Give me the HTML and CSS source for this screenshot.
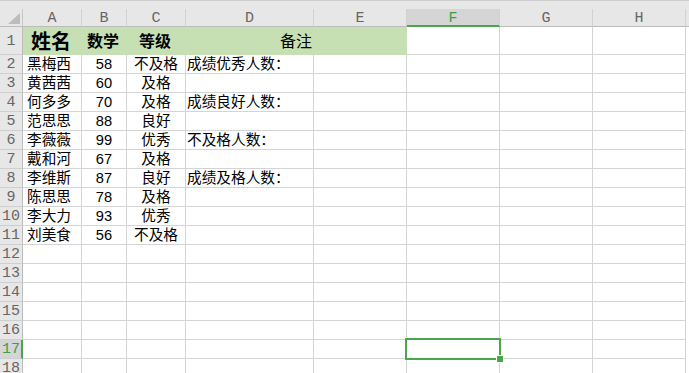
FILE: index.html
```html
<!DOCTYPE html>
<html lang="zh">
<head>
<meta charset="utf-8">
<title>Sheet</title>
<link rel="stylesheet" href="styles.css">
</head>
<body>
<div class="page">
  <div class="topstrip"></div>
  <div class="sheet">
    <div class="corner"><svg class="tri" width="12" height="11" viewBox="0 0 12 11"><polygon points="0,11 12,0 12,11" fill="#bdbdbd"/></svg></div>
    <div class="ch">A</div><div class="ch">B</div><div class="ch">C</div><div class="ch">D</div><div class="ch">E</div><div class="ch ch-sel">F</div><div class="ch">G</div><div class="ch">H</div><div class="ch ch-end"></div>

    <div class="rh">1</div>
    <div class="c g ctr big">姓名</div><div class="c g ctr mid">数学</div><div class="c g ctr mid">等级</div><div class="c g ctr note span2">备注</div><div class="c"></div><div class="c"></div><div class="c"></div><div class="end"></div>

    <div class="rh">2</div><div class="c a">黑梅西</div><div class="c ctr">58</div><div class="c ctr">不及格</div><div class="c d">成绩优秀人数：</div><div class="c"></div><div class="c"></div><div class="c"></div><div class="c"></div><div class="end"></div>
    <div class="rh">3</div><div class="c a">黄茜茜</div><div class="c ctr">60</div><div class="c ctr">及格</div><div class="c d"></div><div class="c"></div><div class="c"></div><div class="c"></div><div class="c"></div><div class="end"></div>
    <div class="rh">4</div><div class="c a">何多多</div><div class="c ctr">70</div><div class="c ctr">及格</div><div class="c d">成绩良好人数：</div><div class="c"></div><div class="c"></div><div class="c"></div><div class="c"></div><div class="end"></div>
    <div class="rh">5</div><div class="c a">范思思</div><div class="c ctr">88</div><div class="c ctr">良好</div><div class="c d"></div><div class="c"></div><div class="c"></div><div class="c"></div><div class="c"></div><div class="end"></div>
    <div class="rh">6</div><div class="c a">李薇薇</div><div class="c ctr">99</div><div class="c ctr">优秀</div><div class="c d">不及格人数：</div><div class="c"></div><div class="c"></div><div class="c"></div><div class="c"></div><div class="end"></div>
    <div class="rh">7</div><div class="c a">戴和河</div><div class="c ctr">67</div><div class="c ctr">及格</div><div class="c d"></div><div class="c"></div><div class="c"></div><div class="c"></div><div class="c"></div><div class="end"></div>
    <div class="rh">8</div><div class="c a">李维斯</div><div class="c ctr">87</div><div class="c ctr">良好</div><div class="c d">成绩及格人数：</div><div class="c"></div><div class="c"></div><div class="c"></div><div class="c"></div><div class="end"></div>
    <div class="rh">9</div><div class="c a">陈思思</div><div class="c ctr">78</div><div class="c ctr">及格</div><div class="c d"></div><div class="c"></div><div class="c"></div><div class="c"></div><div class="c"></div><div class="end"></div>
    <div class="rh">10</div><div class="c a">李大力</div><div class="c ctr">93</div><div class="c ctr">优秀</div><div class="c d"></div><div class="c"></div><div class="c"></div><div class="c"></div><div class="c"></div><div class="end"></div>
    <div class="rh">11</div><div class="c a">刘美食</div><div class="c ctr">56</div><div class="c ctr">不及格</div><div class="c d"></div><div class="c"></div><div class="c"></div><div class="c"></div><div class="c"></div><div class="end"></div>
    <div class="rh">12</div><div class="c"></div><div class="c"></div><div class="c"></div><div class="c"></div><div class="c"></div><div class="c"></div><div class="c"></div><div class="c"></div><div class="end"></div>
    <div class="rh">13</div><div class="c"></div><div class="c"></div><div class="c"></div><div class="c"></div><div class="c"></div><div class="c"></div><div class="c"></div><div class="c"></div><div class="end"></div>
    <div class="rh">14</div><div class="c"></div><div class="c"></div><div class="c"></div><div class="c"></div><div class="c"></div><div class="c"></div><div class="c"></div><div class="c"></div><div class="end"></div>
    <div class="rh">15</div><div class="c"></div><div class="c"></div><div class="c"></div><div class="c"></div><div class="c"></div><div class="c"></div><div class="c"></div><div class="c"></div><div class="end"></div>
    <div class="rh">16</div><div class="c"></div><div class="c"></div><div class="c"></div><div class="c"></div><div class="c"></div><div class="c"></div><div class="c"></div><div class="c"></div><div class="end"></div>
    <div class="rh rh-sel">17</div><div class="c"></div><div class="c"></div><div class="c"></div><div class="c"></div><div class="c"></div><div class="c"></div><div class="c"></div><div class="c"></div><div class="end"></div>
    <div class="rh">18</div><div class="c"></div><div class="c"></div><div class="c"></div><div class="c"></div><div class="c"></div><div class="c"></div><div class="c"></div><div class="c"></div><div class="end"></div>
  </div>
  <div class="sel"><div class="handle"></div></div>
</div>
</body>
</html>
```

FILE: styles.css
```css
* { box-sizing: border-box; }
html, body { margin: 0; padding: 0; background: #fff; overflow: hidden; }
body { width: 689px; height: 373px; }
.page { position: relative; width: 689px; height: 373px; overflow: hidden;
  font-family: "Liberation Sans", "Noto Sans CJK SC", sans-serif; color: #000; }
.topstrip { height: 9px; background: #e7e7e7; border-top: 1px solid #cdcdcd; }
.sheet { display: grid;
  grid-template-columns: 23px 59px 45px 59px 128px 93px 93px 93px 93px 1fr;
  grid-template-rows: 18px 28px repeat(17, 19px); }
.corner { background: #e7e7e7; border-right: 1px solid #c8c8c8; border-bottom: 1px solid #bcbcbc;
  display: flex; align-items: flex-end; justify-content: flex-end; padding: 0 2px 2px 0; }
.tri { display: block; }
.ch { background: #e7e7e7; border-right: 1px solid #d2d2d2; border-bottom: 1px solid #bcbcbc;
  display: flex; align-items: center; justify-content: center;
  font-family: "Liberation Mono", monospace; font-size: 15px; color: #666; padding-top: 1px; }
.ch-end { border-right: none; }
.ch-sel { background: #d5d5d5; color: #3f9f3f; border-bottom: 2px solid #4aa64a; padding-top: 2px; }
.rh { background: #e7e7e7; border-right: 1px solid #bcbcbc; border-bottom: 1px solid #cfcfcf;
  display: flex; align-items: center; justify-content: center;
  font-family: "Liberation Mono", monospace; font-size: 15px; color: #666; padding-top: 1px; }
.rh-sel { background: #d5d5d5; color: #3f9f3f; border-right: 2px solid #4aa64a; padding-left: 1px; }
.c { border-right: 1px solid #d4d4d4; border-bottom: 1px solid #d4d4d4;
  font-size: 14.67px; line-height: 18px; display: flex; align-items: center; white-space: nowrap; }
.end { background: #fff; }
.a { padding-left: 4px; }
.d { padding-left: 1px; }
.ctr { justify-content: center; }
.g { background: #c6e0b4; border-color: transparent; }
.span2 { grid-column: span 2; }
.big { font-size: 20px; font-weight: bold; padding-top: 3px; padding-right: 2px; }
.mid { font-size: 16px; font-weight: bold; padding-top: 3px; padding-right: 2px; }
.note { font-size: 16px; padding-top: 3px; }
.sel { position: absolute; left: 405px; top: 338px; width: 96px; height: 22px;
  border: 2px solid #4aa64a; }
.handle { position: absolute; right: -4px; bottom: -4px; width: 6px; height: 6px;
  background: #4aa64a; outline: 1px solid #fff; }
```
